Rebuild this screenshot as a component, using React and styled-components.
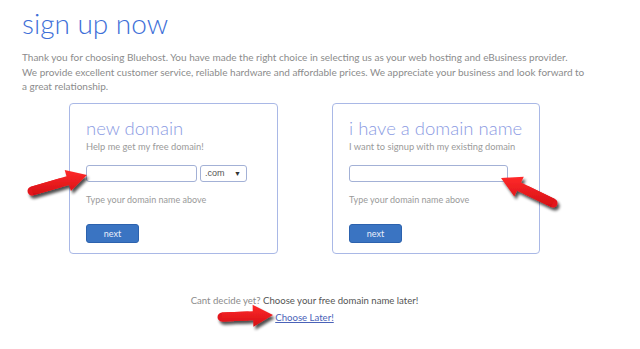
import styled, { createGlobalStyle } from 'styled-components'

const GlobalStyle = createGlobalStyle`
  html, body {
    margin: 0;
    padding: 0;
    background: #ffffff;
  }
  body {
    font-family: Lato, 'Open Sans', sans-serif;
  }
`

const Page = styled.div`
  position: relative;
  width: 640px;
  height: 349px;
  overflow: hidden;
  padding: 6px 0 0 22px;
  box-sizing: border-box;
`

const Title = styled.h1`
  margin: 0;
  font-size: 28px;
  font-weight: 300;
  line-height: 34px;
  color: #3e6fd8;
`

const Intro = styled.p`
  margin: 10px 0 0;
  width: 610px;
  font-size: 10px;
  line-height: 14.5px;
  color: #8c8c8c;
`

const Section = styled.div`
  width: 471px;
  margin: 9px 0 0 47px;
`

const CardRow = styled.div`
  display: flex;
  justify-content: space-between;
`

const Card = styled.div`
  width: ${({ $w }) => $w}px;
  height: 151px;
  box-sizing: border-box;
  border: 1px solid #a9b8e6;
  border-radius: 4px;
  padding: 13px 0 0 16px;
  display: flex;
  flex-direction: column;
`

const CardTitle = styled.h2`
  margin: 0;
  font-size: 18.5px;
  font-weight: 300;
  line-height: 22px;
  color: #8b9be3;
`

const CardSub = styled.div`
  margin-top: 2px;
  font-size: 9.3px;
  line-height: 12px;
  color: #9a9a9a;
`

const InputRow = styled.div`
  display: flex;
  gap: 3px;
  margin-top: 12px;
`

const TextInput = styled.div`
  width: ${({ $w }) => $w}px;
  height: 17px;
  box-sizing: border-box;
  border: 1px solid #a3b1d6;
  border-radius: 3px;
  background: #fff;
`

const Select = styled.div`
  width: 47px;
  height: 17px;
  box-sizing: border-box;
  border: 1px solid #a3b1d6;
  border-radius: 3px;
  display: flex;
  align-items: center;
  justify-content: space-between;
  padding: 0 5px 0 4px;
  font-size: 9px;
  color: #555;
  font-family: 'Liberation Sans', Arial, sans-serif;
`

const Caret = styled.span`
  font-size: 7px;
  color: #333;
`

const Hint = styled.div`
  margin-top: 12px;
  font-size: 9px;
  line-height: 12px;
  color: #9a9a9a;
`

const NextButton = styled.div`
  margin-top: 18px;
  width: 53px;
  height: 19px;
  box-sizing: border-box;
  border: 1px solid #2c62ae;
  border-radius: 3px;
  background: #3a74c2;
  color: #e9effa;
  font-size: 9px;
  display: flex;
  align-items: center;
  justify-content: center;
`

const Later = styled.div`
  margin-top: 38px;
  text-align: center;
  font-size: 9.6px;
  line-height: 17px;
  color: #555;
`

const Muted = styled.span`
  color: #8c8c8c;
`

const LaterLink = styled.a`
  color: #4a62b8;
  text-decoration: underline;
`

const Overlay = styled.svg`
  position: absolute;
  left: 0;
  top: 0;
  pointer-events: none;
`

function arrowPoints([tx, ty], [px, py], w = 4.5, h = 11, L = 20) {
  const dx = px - tx
  const dy = py - ty
  const len = Math.hypot(dx, dy)
  const ux = dx / len
  const uy = dy / len
  const nx = -uy
  const ny = ux
  const bx = px - ux * L
  const by = py - uy * L
  const pts = [
    [tx + nx * w, ty + ny * w],
    [bx + nx * w, by + ny * w],
    [bx + nx * h, by + ny * h],
    [px, py],
    [bx - nx * h, by - ny * h],
    [bx - nx * w, by - ny * w],
    [tx - nx * w, ty - ny * w],
  ]
  return pts.map((p) => p.map((v) => v.toFixed(1)).join(',')).join(' ')
}

function Arrow({ tail, tip }) {
  return (
    <g filter="url(#shadow)">
      <line
        x1={tail[0]}
        y1={tail[1]}
        x2={(tail[0] + tip[0]) / 2}
        y2={(tail[1] + tip[1]) / 2}
        stroke="#e3161b"
        strokeWidth="9"
        strokeLinecap="round"
      />
      <polygon points={arrowPoints(tail, tip)} fill="url(#red)" />
    </g>
  )
}

function Arrows() {
  return (
    <Overlay width="640" height="349" viewBox="0 0 640 349">
      <defs>
        <linearGradient id="red" x1="0" y1="0" x2="0" y2="1">
          <stop offset="0" stopColor="#ff2a2a" />
          <stop offset="1" stopColor="#d40f14" />
        </linearGradient>
        <filter id="shadow" x="-30%" y="-60%" width="160%" height="220%">
          <feGaussianBlur in="SourceAlpha" stdDeviation="1.6" />
          <feOffset dx="2" dy="3" result="b" />
          <feComponentTransfer>
            <feFuncA type="linear" slope="0.7" />
          </feComponentTransfer>
          <feMerge>
            <feMergeNode />
            <feMergeNode in="SourceGraphic" />
          </feMerge>
        </filter>
      </defs>
      <Arrow tail={[32, 191]} tip={[87, 175]} />
      <Arrow tail={[553, 203]} tip={[501, 178]} />
      <Arrow tail={[222, 317]} tip={[273, 315]} />
    </Overlay>
  )
}

export default function App() {
  return (
    <>
      <GlobalStyle />
      <Page>
        <Title>sign up now</Title>
        <Intro>
          Thank you for choosing Bluehost. You have made the right choice in selecting us as your web
          hosting and eBusiness provider.
          <br />
          We provide excellent customer service, reliable hardware and affordable prices. We appreciate
          your business and look forward to
          <br />a great relationship.
        </Intro>
        <Section>
          <CardRow>
            <Card $w={209}>
              <CardTitle>new domain</CardTitle>
              <CardSub>Help me get my free domain!</CardSub>
              <InputRow>
                <TextInput $w={111} />
                <Select>
                  .com <Caret>▼</Caret>
                </Select>
              </InputRow>
              <Hint>Type your domain name above</Hint>
              <NextButton>next</NextButton>
            </Card>
            <Card $w={208}>
              <CardTitle>i have a domain name</CardTitle>
              <CardSub>I want to signup with my existing domain</CardSub>
              <InputRow>
                <TextInput $w={159} />
              </InputRow>
              <Hint>Type your domain name above</Hint>
              <NextButton>next</NextButton>
            </Card>
          </CardRow>
          <Later>
            <Muted>Cant decide yet?</Muted> Choose your free domain name later!
            <br />
            <LaterLink href="#">Choose Later!</LaterLink>
          </Later>
        </Section>
        <Arrows />
      </Page>
    </>
  )
}
